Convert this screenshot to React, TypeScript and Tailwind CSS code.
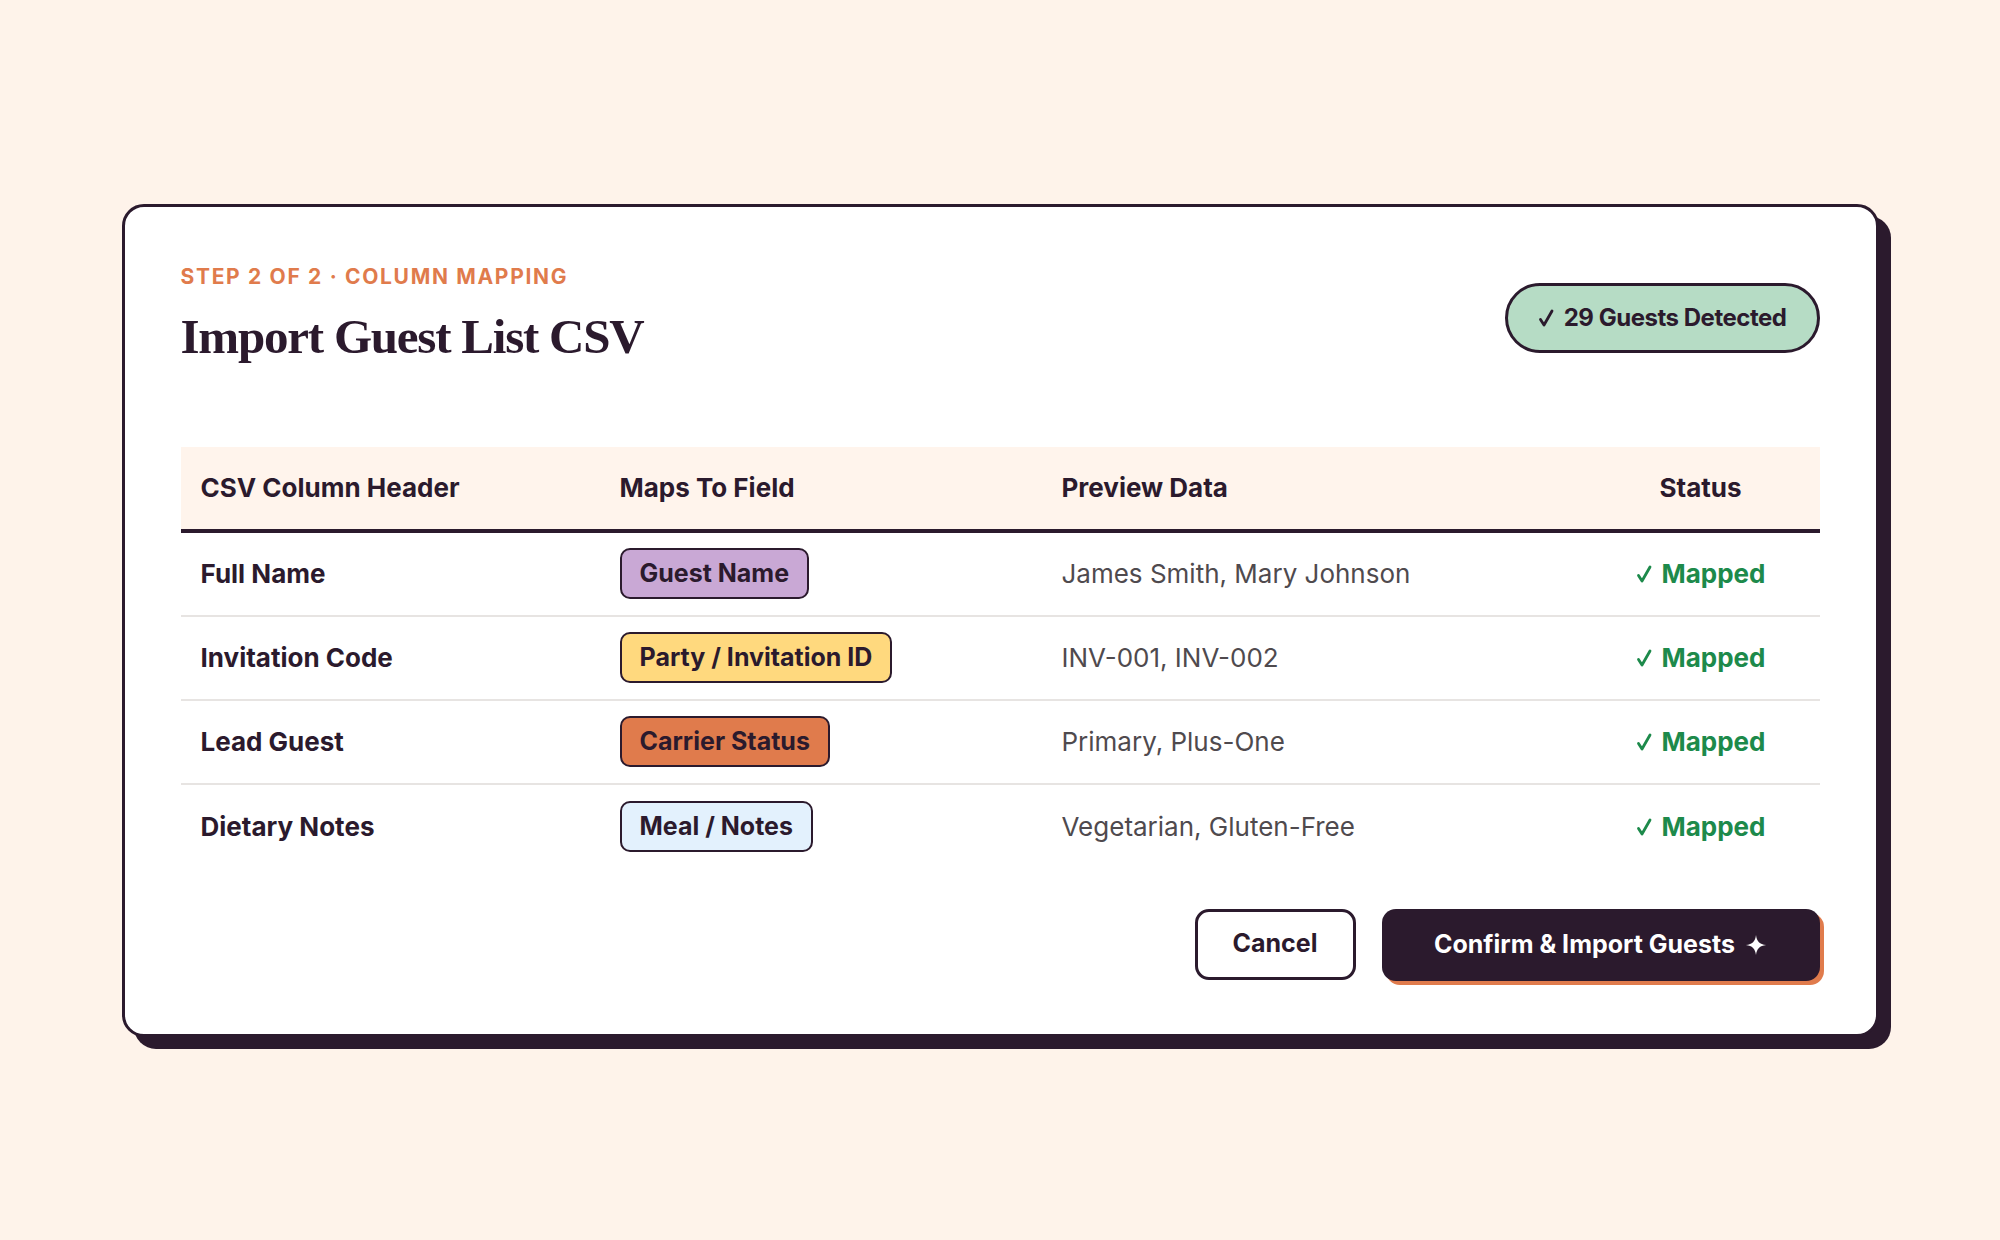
type MappingRow = {
  header: string;
  field: string;
  pill: string;
  preview: string;
};

const rows: MappingRow[] = [
  { header: "Full Name", field: "Guest Name", pill: "bg-[#C9A8D5]", preview: "James Smith, Mary Johnson" },
  { header: "Invitation Code", field: "Party / Invitation ID", pill: "bg-[#FFD97E]", preview: "INV-001, INV-002" },
  { header: "Lead Guest", field: "Carrier Status", pill: "bg-[#E07B4C]", preview: "Primary, Plus-One" },
  { header: "Dietary Notes", field: "Meal / Notes", pill: "bg-[#E3F1FD]", preview: "Vegetarian, Gluten-Free" },
];

const gridCols = "grid grid-cols-[419px_442px_539px_240px] items-center";

function CheckMark({ className }: { className?: string }) {
  return (
    <svg viewBox="0 0 16 20" className={className} fill="none" aria-hidden="true">
      <path d="M2.5 11.5 L6 17 L14 3" stroke="currentColor" strokeWidth="2.8" strokeLinecap="round" strokeLinejoin="round" />
    </svg>
  );
}

export default function App() {
  return (
    <div className="flex min-h-screen items-center justify-center bg-[#FEF3EA] font-['Inter','Noto_Sans',sans-serif] text-[#2B1A2D]">
      <div className="w-[1757px] rounded-[22px] border-[3px] border-[#2B1A2D] bg-white px-[56px] pt-[56px] pb-[53px] shadow-[12px_12px_0_#2B1A2D]">
        <div className="flex items-center justify-between">
          <div>
            <p className="text-[21px] font-bold uppercase leading-[28px] tracking-[0.08em] text-[#E07B4C]">
              Step 2 of 2 · Column Mapping
            </p>
            <h1 className="mt-[18px] font-['Liberation_Serif','Times_New_Roman',serif] text-[49px] font-bold leading-[55px] tracking-[-0.025em]">
              Import Guest List CSV
            </h1>
          </div>
          <div className="mt-[10px] flex h-[70px] items-center gap-[10px] rounded-full border-[3px] border-[#2B1A2D] bg-[#B6DCC5] px-[30px] text-[24px] font-bold tracking-[-0.02em]">
            <CheckMark className="h-[20px] w-[16px]" />
            <span>29 Guests Detected</span>
          </div>
        </div>

        <div className="mt-[83px]">
          <div className={`${gridCols} h-[86px] border-b-4 border-[#2B1A2D] bg-[#FFF4EC] text-[26px] font-bold`}>
            <div className="pl-5">CSV Column Header</div>
            <div className="pl-5">Maps To Field</div>
            <div className="pl-5">Preview Data</div>
            <div className="text-center">Status</div>
          </div>
          {rows.map((row, index) => (
            <div
              key={row.header}
              className={`${gridCols} h-[84px] ${index < rows.length - 1 ? "border-b-2 border-[#E7E4E2]" : ""}`}
            >
              <div className="pl-5 text-[26px] font-bold">{row.header}</div>
              <div className="pl-5">
                <span
                  className={`inline-flex h-[51px] items-center rounded-[10px] border-[2.5px] border-[#2B1A2D] px-[18px] text-[25px] font-bold ${row.pill}`}
                >
                  {row.field}
                </span>
              </div>
              <div className="pl-5 text-[26px] text-[#4F4A4E]">{row.preview}</div>
              <div className="flex items-center justify-center gap-[10px] text-[26px] font-bold text-[#1D8A4B]">
                <CheckMark className="h-[20px] w-[16px]" />
                <span>Mapped</span>
              </div>
            </div>
          ))}
        </div>

        <div className="mt-10 flex justify-end gap-[26px]">
          <button
            type="button"
            className="h-[71px] w-[161px] rounded-[14px] border-[3px] border-[#2B1A2D] bg-white text-[25px] font-bold"
          >
            Cancel
          </button>
          <button
            type="button"
            className="flex h-[72px] w-[438px] items-center justify-center gap-[10px] rounded-[14px] bg-[#2B1A2D] text-[25px] font-bold text-white shadow-[4px_4px_0_#E07B4C]"
          >
            <span>Confirm &amp; Import Guests</span>
            <svg viewBox="0 0 24 24" className="h-[22px] w-[22px]" aria-hidden="true">
              <path d="M12 1 C12.8 8 16 11.2 23 12 C16 12.8 12.8 16 12 23 C11.2 16 8 12.8 1 12 C8 11.2 11.2 8 12 1 Z" fill="currentColor" />
            </svg>
          </button>
        </div>
      </div>
    </div>
  );
}
